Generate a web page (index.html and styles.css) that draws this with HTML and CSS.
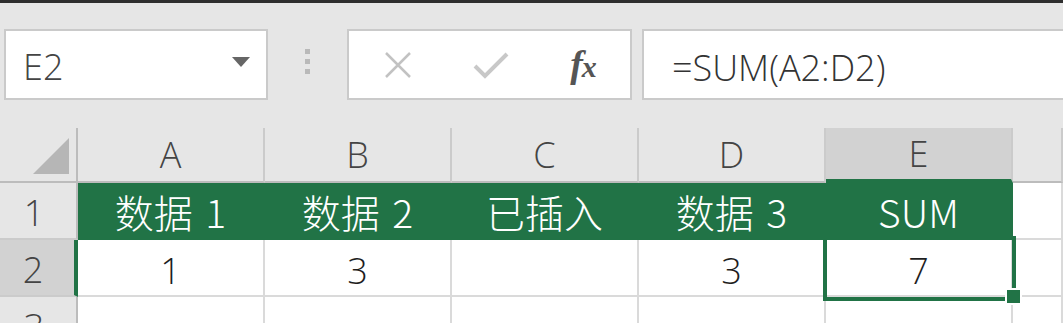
FILE: index.html
```html
<!DOCTYPE html>
<html>
    <head>
        <meta charset="UTF-8">
        <title>SUM</title>
        <link rel="stylesheet" href="styles.css">
    </head>
    <body>
        <div class="topline"></div>

        <div class="formula-bar">
            <div class="name-box">
                <span class="name">E2</span>
                <svg class="caret" width="18" height="10" viewBox="0 0 18 10"><polygon points="0,0 18,0 9,10" fill="#666"/></svg>
            </div>
            <div class="grip"><i></i><i></i><i></i></div>
            <div class="fx-buttons">
                <div class="slot">
                    <svg width="28" height="26" viewBox="0 0 28 26"><path d="M2 1 L26 25 M26 1 L2 25" stroke="#c2c2c2" stroke-width="2.5" fill="none"/></svg>
                </div>
                <div class="slot">
                    <svg width="36" height="28" viewBox="0 0 36 28"><path d="M2 15 L12 25 L34 3" stroke="#c8c8c8" stroke-width="4" fill="none"/></svg>
                </div>
                <div class="slot fx"><span class="f">f</span><span class="x">x</span></div>
            </div>
            <div class="formula-input">=SUM(A2:D2)</div>
        </div>

        <div class="sheet">
            <div class="grid">
                <div class="hd corner">
                    <svg width="36" height="36" viewBox="0 0 36 36"><polygon points="36,0 36,36 0,36" fill="#b6b6b6"/></svg>
                </div>
                <div class="hd col">A</div>
                <div class="hd col">B</div>
                <div class="hd col">C</div>
                <div class="hd col">D</div>
                <div class="hd col active">E</div>
                <div class="hd col"></div>

                <div class="hd row">1</div>
                <div class="cell head">数据 1</div>
                <div class="cell head">数据 2</div>
                <div class="cell head">已插入</div>
                <div class="cell head">数据 3</div>
                <div class="cell head">SUM</div>
                <div class="cell"></div>

                <div class="hd row active">2</div>
                <div class="cell">1</div>
                <div class="cell">3</div>
                <div class="cell"></div>
                <div class="cell">3</div>
                <div class="cell">7</div>
                <div class="cell"></div>

                <div class="hd row">3</div>
                <div class="cell"></div>
                <div class="cell"></div>
                <div class="cell"></div>
                <div class="cell"></div>
                <div class="cell"></div>
                <div class="cell"></div>
            </div>
            <div class="selection"></div>
            <div class="handle"></div>
        </div>
    </body>
</html>
```

FILE: styles.css
```css
* { margin: 0; padding: 0; box-sizing: border-box; }
html, body {
    width: 1063px;
    height: 323px;
    overflow: hidden;
}
body {
    background: #e6e6e6;
    font-family: "Open Sans", "Noto Sans CJK SC", sans-serif;
    font-weight: 300;
    color: #222;
}
.topline {
    height: 3px;
    background: #2e2e2e;
}

/* formula bar */
.formula-bar {
    display: flex;
    padding-top: 26px;
    height: 97px;
}
.name-box {
    width: 264px;
    margin-left: 4px;
    background: #fff;
    border: 2px solid #cacaca;
    display: flex;
    align-items: center;
    justify-content: space-between;
    padding: 0 16px 0 17px;
}
.name-box .name {
    font-size: 36px;
    color: #444;
    padding-top: 4px;
}
.name-box .caret { margin-top: -6px; }
.grip {
    width: 79px;
    display: flex;
    flex-direction: column;
    align-items: center;
    justify-content: center;
    gap: 5px;
    padding-bottom: 6px;
}
.grip i {
    display: block;
    width: 5px;
    height: 5px;
    background: #b9b9b9;
}
.fx-buttons {
    width: 285px;
    background: #fff;
    border: 2px solid #cacaca;
    display: flex;
    padding-left: 2px;
}
.fx-buttons .slot {
    width: 93px;
    display: flex;
    align-items: center;
    justify-content: center;
}
.fx-buttons .fx {
    font-family: "Liberation Serif", serif;
    font-style: italic;
    font-weight: bold;
    color: #555;
    padding-bottom: 2px;
}
.fx .f { font-size: 38px; }
.fx .x { font-size: 30px; margin-left: -1px; margin-top: 6px; }
.formula-input {
    flex: 1;
    margin-left: 10px;
    margin-right: -10px;
    background: #fff;
    border: 2px solid #cacaca;
    font-size: 36px;
    color: #333;
    padding: 12px 0 0 28px;
}

/* sheet */
.sheet {
    position: relative;
    margin-top: 28px;
}
.grid {
    display: grid;
    grid-template-columns: 78px repeat(5, 187px) 1fr;
    grid-template-rows: 55px 57px 57px 57px;
}
.hd {
    background: #e6e6e6;
    color: #444;
    font-size: 36px;
    display: flex;
    align-items: center;
    justify-content: center;
}
.hd.col {
    border-right: 2px solid #cbcbcb;
    border-bottom: 2px solid #bcbcbc;
}
.hd.col.active {
    background: #d2d2d2;
    border-bottom: 4px solid #217346;
}
.hd.corner {
    border-right: 2px solid #bcbcbc;
    border-bottom: 2px solid #bcbcbc;
    align-items: flex-end;
    justify-content: flex-end;
    padding: 0 7px 7px 0;
}
.hd.row {
    border-right: 2px solid #bcbcbc;
    border-bottom: 2px solid #cbcbcb;
    padding: 4px 8px 0 0;
}
.hd.row.active {
    background: #d2d2d2;
    border-right: 4px solid #217346;
}
.cell {
    background: #fff;
    border-right: 2px solid #dadada;
    border-bottom: 2px solid #dadada;
    font-size: 36px;
    display: flex;
    align-items: center;
    justify-content: center;
    padding-top: 5px;
    color: #1e1e1e;
}
.cell.head {
    background: #217346;
    border-color: #217346;
    color: #fff;
    padding-top: 0;
    font-family: "Noto Sans CJK SC", sans-serif;
    font-weight: 300;
    font-size: 39px;
    word-spacing: 4px;
}
.selection {
    position: absolute;
    left: 823px;
    top: 108px;
    width: 193px;
    height: 65px;
    border: 4px solid #217346;
}
.handle {
    position: absolute;
    left: 1005px;
    top: 160px;
    width: 17px;
    height: 17px;
    background: #217346;
    border: 2px solid #fff;
}
```
